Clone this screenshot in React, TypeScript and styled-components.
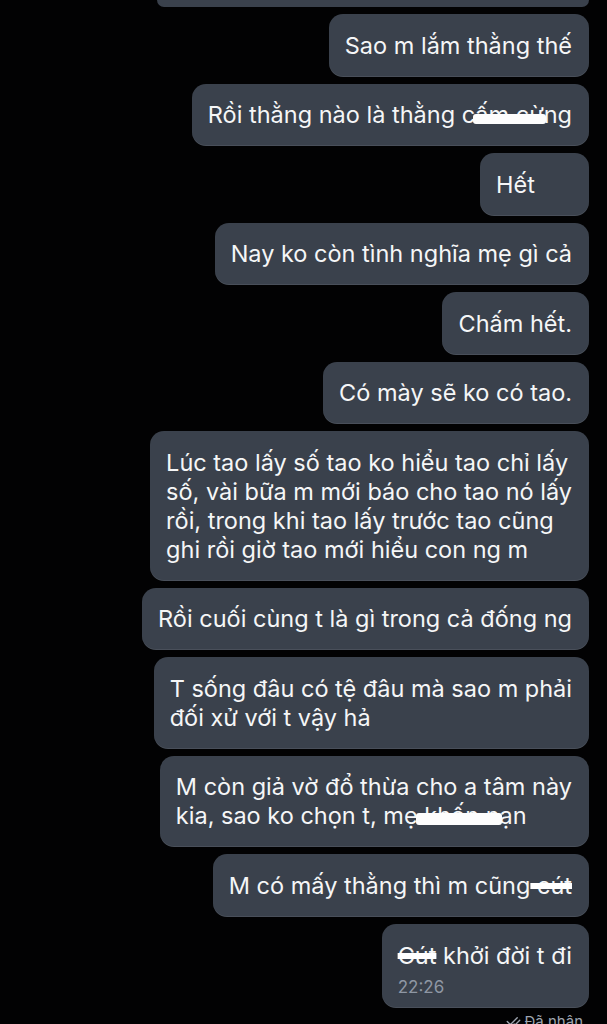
import React from "react";
import styled, { createGlobalStyle } from "styled-components";
import { CheckCheck } from "lucide-react";

const GlobalStyle = createGlobalStyle`
  html, body {
    margin: 0;
    padding: 0;
    background: #000;
  }
  body {
    font-family: Inter, "Liberation Sans", Arial, sans-serif;
    -webkit-font-smoothing: antialiased;
  }
`;

const Screen = styled.div`
  width: 607px;
  height: 1024px;
  overflow: hidden;
  background: #020203;
`;

const Thread = styled.div`
  display: flex;
  flex-direction: column;
  align-items: flex-end;
  gap: 7px;
  padding: 0 18px 0 0;
`;

const Bubble = styled.div<{ $minWidth?: number }>`
  box-sizing: border-box;
  min-width: ${(p) => (p.$minWidth ? `${p.$minWidth}px` : "0")};
  background: #3a414c;
  border-radius: 14px;
  box-shadow: inset 0 -1px 0 rgba(255, 255, 255, 0.08);
  padding: 16.75px 17px 16.75px 16px;
  color: #f5f6f7;
  font-size: 23.5px;
  line-height: 29px;
  white-space: pre-line;
`;

const Stub = styled.div`
  width: 432px;
  height: 7px;
  background: #3a414c;
  border-radius: 0 0 14px 14px;
`;

const LastBubble = styled(Bubble)`
  padding-top: 17px;
  padding-bottom: 11px;
`;

const Time = styled.div`
  margin-top: 7px;
  font-size: 17px;
  line-height: 20px;
  color: #8f97a4;
`;

const Censor = styled.span<{ $h: number }>`
  position: relative;
  &::after {
    content: "";
    position: absolute;
    left: -2px;
    right: -2px;
    top: ${(p) => 24 - p.$h}px;
    height: ${(p) => p.$h}px;
    background: #fdfdfd;
    border-radius: 3px;
  }
`;

const Strike = styled.span`
  text-decoration: line-through;
  text-decoration-color: #fff;
  text-decoration-thickness: 6px;
`;

const Status = styled.div`
  display: flex;
  align-items: center;
  gap: 4px;
  margin-top: -1px;
  padding-right: 6px;
  color: #9ea5b0;
  font-size: 15px;
  line-height: 16px;
`;

type Msg = { text: React.ReactNode; minWidth?: number };

const messages: Msg[] = [
  { text: "Sao m lắm thằng thế" },
  {
    text: (
      <>
        Rồi thằng nào là thằng c<Censor $h={10}>ấm cừ</Censor>ng
      </>
    ),
  },
  { text: "Hết", minWidth: 109 },
  { text: "Nay ko còn tình nghĩa mẹ gì cả" },
  { text: "Chấm hết." },
  { text: "Có mày sẽ ko có tao." },
  {
    text: "Lúc tao lấy số tao ko hiểu tao chỉ lấy\nsố, vài bữa m mới báo cho tao nó lấy\nrồi, trong khi tao lấy trước tao cũng\nghi rồi giờ tao mới hiểu con ng m",
  },
  { text: "Rồi cuối cùng t là gì trong cả đống ng" },
  { text: "T sống đâu có tệ đâu mà sao m phải\nđối xử với t vậy hả" },
  {
    text: (
      <>
        {"M còn giả vờ đổ thừa cho a tâm này\nkia, sao ko chọn t, mẹ"}
        <Censor $h={12}> khốn n</Censor>ạn
      </>
    ),
  },
  {
    text: (
      <>
        M có mấy thằng thì m cũng<Strike> cút</Strike>
      </>
    ),
  },
];

export default function App() {
  return (
    <Screen>
      <GlobalStyle />
      <Thread>
        <Stub />
        {messages.map((m, i) => (
          <Bubble key={i} $minWidth={m.minWidth}>
            {m.text}
          </Bubble>
        ))}
        <LastBubble>
          <div>
            <Strike>Cút</Strike> khởi đời t đi
          </div>
          <Time>22:26</Time>
        </LastBubble>
        <Status>
          <CheckCheck size={15} strokeWidth={2.2} />
          Đã nhận
        </Status>
      </Thread>
    </Screen>
  );
}
